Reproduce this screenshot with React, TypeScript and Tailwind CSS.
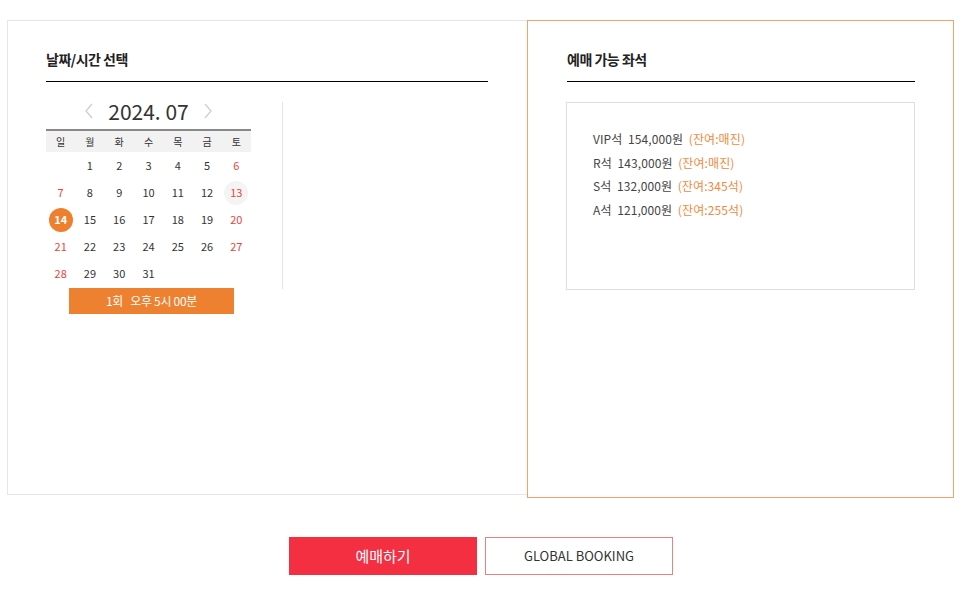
const font = { fontFamily: '"Noto Sans CJK KR", "Noto Sans", sans-serif' };

const weekdays = ['일', '월', '화', '수', '목', '금', '토'];
const weeks: (number | null)[][] = [
  [null, 1, 2, 3, 4, 5, 6],
  [7, 8, 9, 10, 11, 12, 13],
  [14, 15, 16, 17, 18, 19, 20],
  [21, 22, 23, 24, 25, 26, 27],
  [28, 29, 30, 31, null, null, null],
];

const seats = [
  { name: 'VIP석', price: '154,000원', left: '(잔여:매진)' },
  { name: 'R석', price: '143,000원', left: '(잔여:매진)' },
  { name: 'S석', price: '132,000원', left: '(잔여:345석)' },
  { name: 'A석', price: '121,000원', left: '(잔여:255석)' },
];

function DayCell({ day, col }: { day: number | null; col: number }) {
  if (day === null) return <div className="h-[27px]" />;
  const weekend = col === 0 || col === 6;
  if (day === 14) {
    return (
      <div className="h-[27px] flex items-center justify-center">
        <span className="w-[24px] h-[24px] rounded-full bg-[#ee7f2d] text-white font-bold flex items-center justify-center text-[11px]">
          14
        </span>
      </div>
    );
  }
  return (
    <div className="h-[27px] flex items-center justify-center">
      <span
        className={`w-[24px] h-[24px] rounded-full flex items-center justify-center text-[11px] ${
          day === 13 ? 'bg-[#f4f4f4]' : ''
        } ${weekend ? 'text-[#e8463c]' : 'text-[#333]'}`}
      >
        {day}
      </span>
    </div>
  );
}

export default function App() {
  return (
    <div className="w-[964px] h-[591px] bg-white" style={font}>
      <div className="flex pl-[7px] pt-[20px] items-start">
        <div className="w-[521px] h-[475px] border border-[#e6e6e6] pl-[38px] pt-[28px] pr-[39px]">
          <h2 className="text-[14px] font-bold text-[#222] tracking-[-0.5px] leading-[20px] pb-[12px] border-b border-black">
            날짜/시간 선택
          </h2>
          <div className="flex mt-[20px]">
            <div className="w-[205px]">
              <div className="flex items-center justify-center gap-[14px] h-[26px] -mt-[4px]">
                <svg width="10" height="16" viewBox="0 0 10 16" className="text-[#ccc]">
                  <path d="M8 1 L2 8 L8 15" fill="none" stroke="currentColor" strokeWidth="1.2" />
                </svg>
                <span className="text-[21px] text-[#333] leading-[26px]">2024. 07</span>
                <svg width="10" height="16" viewBox="0 0 10 16" className="text-[#ccc]">
                  <path d="M2 1 L8 8 L2 15" fill="none" stroke="currentColor" strokeWidth="1.2" />
                </svg>
              </div>
              <div className="grid grid-cols-7 h-[23px] mt-[5px] bg-[#f2f2f2] border-t-2 border-[#888] items-center">
                {weekdays.map(w => (
                  <span key={w} className="text-center text-[10px] text-[#333]">
                    {w}
                  </span>
                ))}
              </div>
              <div>
                {weeks.map((week, i) => (
                  <div key={i} className="grid grid-cols-7">
                    {week.map((d, j) => (
                      <DayCell key={j} day={d} col={j} />
                    ))}
                  </div>
                ))}
              </div>
              <div className="ml-[23px] w-[165px] h-[26px] mt-[1px] bg-[#ee8130] text-white text-[12px] flex items-center justify-center tracking-[-0.3px]">
                1회&nbsp;&nbsp;&nbsp;오후 5시 00분
              </div>
            </div>
            <div className="ml-[31px] w-px h-[187px] bg-[#e3e3e3]" />
          </div>
        </div>
        <div className="-ml-px w-[427px] h-[478px] border border-[#f0a468] pl-[39px] pt-[28px] pr-[38px]">
          <h2 className="text-[14px] font-bold text-[#222] tracking-[-0.5px] leading-[20px] pb-[12px] border-b border-black">
            예매 가능 좌석
          </h2>
          <div className="mt-[20px] -ml-px h-[188px] border border-[#dedede] pl-[26px] pt-[24px]">
            {seats.map(s => (
              <div key={s.name} className="text-[12px] leading-[23.7px] text-[#444] tracking-[0.1px]">
                {s.name}&nbsp;&nbsp;{s.price}&nbsp;&nbsp;<span className="text-[#f08a3c]">{s.left}</span>
              </div>
            ))}
          </div>
        </div>
      </div>
      <div className="flex justify-center gap-[8px] mt-[39px] pr-[2px]">
        <button className="w-[188px] h-[38px] bg-[#f52f42] text-white text-[15px]">예매하기</button>
        <button className="w-[188px] h-[38px] border border-[#e8827f] text-[#333] text-[13px] bg-white">
          GLOBAL BOOKING
        </button>
      </div>
    </div>
  );
}
